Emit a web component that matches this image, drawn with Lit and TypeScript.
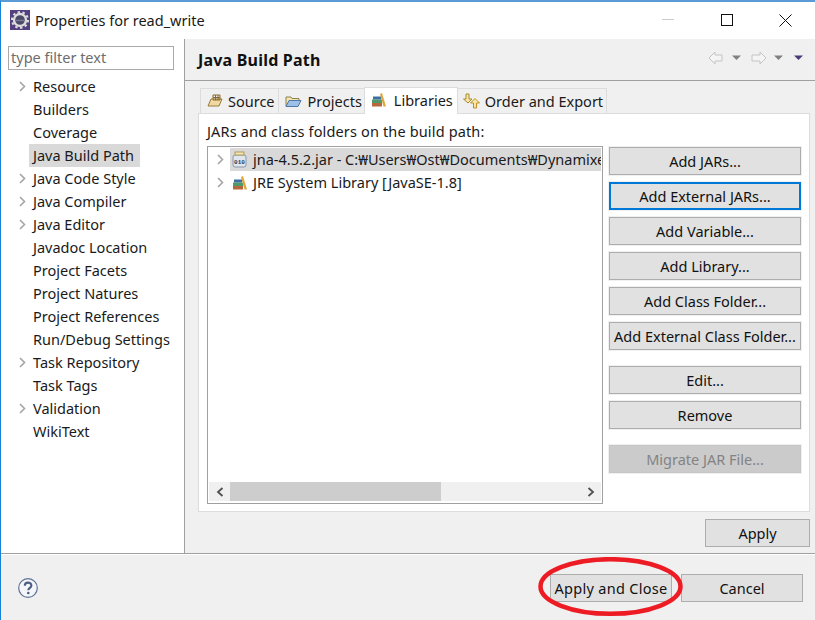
import { LitElement, html, css, svg } from 'lit';
import { customElement } from 'lit/decorators.js';

const tree = [
  ['Resource', true], ['Builders', false], ['Coverage', false], ['Java Build Path', false],
  ['Java Code Style', true], ['Java Compiler', true], ['Java Editor', true], ['Javadoc Location', false],
  ['Project Facets', false], ['Project Natures', false], ['Project References', false],
  ['Run/Debug Settings', false], ['Task Repository', true], ['Task Tags', false],
  ['Validation', true], ['WikiText', false],
] as [string, boolean][];

const chevron = svg`<svg class="chev" width="9" height="11" viewBox="0 0 9 11"><path d="M2 1l4.500 4.500L2 10" fill="none" stroke="#a5a5a5" stroke-width="1.600"/></svg>`;

const booksIcon = html`<svg width="16" height="16" viewBox="0 0 16 16">
  <rect x="1" y="11" width="10" height="3.500" fill="#b5683a"/>
  <rect x="1" y="7.500" width="10" height="3.500" fill="#4f9a6a"/>
  <rect x="2" y="4.500" width="8" height="3" fill="#3f6f9e"/>
  <path d="M9 2l2-1 4 13.500h-2.500z" fill="#e0a63c"/>
</svg>`;

@customElement('app-root')
export class AppRoot extends LitElement {
  static styles = css`
    :host {
      display: block;
      width: 815px;
      height: 620px;
      overflow: hidden;
      font-family: "Noto Sans", sans-serif;
      font-size: 14.5px;
      color: #1a1a1a;
    }
    .win {
      width: 100%;
      height: 100%;
      box-sizing: border-box;
      border-top: 2px solid #5a9bd5;
      border-left: 1px solid #1683d8;
      display: flex;
      flex-direction: column;
      background: #fff;
    }
    .title {
      height: 37px;
      flex: none;
      display: flex;
      align-items: center;
      padding-left: 9px;
      gap: 5px;
    }
    .title .name { flex: 1; margin-top: -2px; }
    .title > svg { margin-top: -1px; }
    .winbtns { display: flex; align-items: center; margin-top: -1px; }
    .winbtns svg { display: block; }
    .wb { width: 59px; display: flex; justify-content: center; }
    .main { flex: 1; display: flex; min-height: 0; border-bottom: 1px solid #a0a0a0; }
    .left {
      width: 183px;
      flex: none;
      border-right: 1px solid #a0a0a0;
      box-sizing: content-box;
      padding-top: 7px;
    }
    .filter {
      margin-left: 7px;
      width: 162px;
      height: 22px;
      border: 1px solid #a9a9a9;
      color: #6d6d6d;
      line-height: 21px;
      padding-left: 2px;
    }
    .tree { margin-top: 5px; }
    .node { height: 23px; display: flex; align-items: center; padding-left: 16px; }
    .arrow { width: 12px; flex: none; display: flex; margin-left: 1px; margin-right: -1px; }
    .label { padding: 0 4px; line-height: 23px; }
    .label.sel { background: #d9d9d9; padding-right: 6px; }
    .right { flex: 1; background: #f0f0f0; display: flex; flex-direction: column; min-width: 0; }
    .head {
      height: 42px;
      flex: none;
      box-sizing: border-box;
      border-bottom: 1px solid #a0a0a0;
      display: flex;
      align-items: center;
      padding: 0 11px 0 13px;
      font-weight: 700;
      font-size: 16px;
      letter-spacing: .2px;
      color: #111;
    }
    .head .h { flex: 1; }
    .nav { display: flex; align-items: center; margin-bottom: 4px; }
    .nav svg { display: block; }
    .tabs { display: flex; margin: 6px 0 0 15px; height: 26px; align-items: flex-end; position: relative; z-index: 1; }
    .tab {
      height: 25px;
      box-sizing: border-box;
      border: 1px solid #dcdcdc;
      border-bottom: none;
      border-right: none;
      display: flex;
      align-items: center;
      gap: 5px;
      padding: 0 3px 0 6px;
    }
    .tab:nth-child(4) { border-right: 1px solid #dcdcdc; padding-left: 5px; }
    .tab:nth-child(2) { gap: 6px; padding-right: 2px; }
    .tab.on {
      background: #fff;
      height: 27px;
      margin-bottom: -1px;
      border-right: 1px solid #dcdcdc;
      padding-bottom: 3px;
      padding-right: 4px;
      gap: 7px;
    }
    .tab.on + .tab { border-left: none; }
    .tabs svg { display: block; flex: none; }
    .panel {
      margin: 0 5px 0 13px;
      height: 399px;
      flex: none;
      box-sizing: border-box;
      background: #fff;
      border: 1px solid #dcdcdc;
      padding: 7px 8px 7px;
      display: flex;
      flex-direction: column;
    }
    .caption { line-height: 20px; height: 25px; letter-spacing: .15px; }
    .body { flex: 1; display: flex; min-height: 0; }
    .list {
      width: 396px;
      flex: none;
      box-sizing: border-box;
      border: 1px solid #a0a0a0;
      display: flex;
      flex-direction: column;
      padding: 1px 1px 2px;
    }
    .rows { flex: 1; }
    .row { height: 23px; display: flex; align-items: center; white-space: nowrap; overflow: hidden; flex: 1; min-width: 0; }
    .row .txt { line-height: 23px; }
    .row .ico { display: flex; margin: 0 4px 0 2px; flex: none; width: 17px; }
    .row.sel { background: #d9d9d9; }
    .sel-wrap { display: flex; align-items: center; }
    .sel-arrow { width: 21px; flex: none; padding-left: 7px; box-sizing: border-box; display: flex; }
    .scroll { height: 19px; background: #f0f0f0; display: flex; align-items: center; }
    .sbtn { width: 21px; display: flex; justify-content: center; flex: none; }
    .sthumb { width: 211px; height: 19px; background: #cdcdcd; }
    .strack { flex: 1; }
    .btns { flex: none; width: 192px; margin: 1px 0 0 6px; display: flex; flex-direction: column; }
    .btn {
      box-sizing: border-box;
      background: #e1e1e1;
      border: 1px solid #adadad;
      height: 28px;
      display: flex;
      align-items: center;
      justify-content: center;
      color: #111;
      white-space: nowrap;
    }
    .btn.focus { border: 2px solid #0078d7; }
    .btn.dis { color: #838383; background: #cbcbcb; border-color: #c6c6c6; }
    .btns .btn { margin-bottom: 7px; box-shadow: 0 0 0 1px #f0f0f0; }
    .btns .btn.gap { margin-top: 9px; }
    .applyrow { display: flex; justify-content: flex-end; padding: 7px 5px 0 0; }
    .applyrow .btn { width: 105px; }
    .foot {
      height: 66px;
      flex: none;
      box-sizing: border-box;
      background: #f0f0f0;
      border-top: 1px solid #fff;
      display: flex;
      align-items: center;
      padding: 0 12px 0 17px;
    }
    .foot .sp { flex: 1; }
    .foot .btn { height: 28px; margin-top: 1px; }
    .foot .ac { width: 122px; margin-right: 9px; position: relative; letter-spacing: .3px; }
    .foot .cancel { width: 122px; }
    .ring { position: absolute; left: -13px; top: -18px; pointer-events: none; }
  `;

  render() {
    return html`
      <div class="win">
        <div class="title">
          <svg width="20" height="20" viewBox="0 0 20 20">
            <rect width="20" height="20" fill="#54407f"/>
            <circle cx="10" cy="10" r="8" fill="none" stroke="#e0e0e0" stroke-width="2" stroke-dasharray="2.400 2.600"/>
            <circle cx="10" cy="10" r="6" fill="#4b4a66" stroke="#dcdcdc" stroke-width="2.400"/>
            <path d="M6 10.500h8" stroke="#77759a" stroke-width="1.500"/>
          </svg>
          <span class="name">Properties for read_write</span>
          <div class="winbtns">
            <div class="wb"><svg width="12" height="2"><rect width="12" height="1" fill="#cccccc"/></svg></div>
            <div class="wb"><svg width="12" height="12"><rect x=".5" y=".5" width="11" height="11" fill="none" stroke="#111"/></svg></div>
            <div class="wb"><svg width="13" height="13"><path d="M.5.5l12 12M12.500.5l-12 12" stroke="#111" fill="none"/></svg></div>
          </div>
        </div>
        <div class="main">
          <div class="left">
            <div class="filter">type filter text</div>
            <div class="tree">
              ${tree.map(([t, exp]) => html`
                <div class="node">
                  <span class="arrow">${exp ? chevron : ''}</span>
                  <span class="label ${t === 'Java Build Path' ? 'sel' : ''}">${t}</span>
                </div>`)}
            </div>
          </div>
          <div class="right">
            <div class="head">
              <span class="h">Java Build Path</span>
              <div class="nav">
                <svg width="96" height="14" viewBox="0 0 96 14">
                  <path d="M1 7l6-6v3h7v6H7v3z" fill="#f4f4f4" stroke="#c4c4c4"/>
                  <path d="M24 4.500h9L28.500 9z" fill="#808080"/>
                  <path d="M58 7l-6-6v3h-8v6h8v3z" fill="#f4f4f4" stroke="#c4c4c4"/>
                  <path d="M66 4.500h9L70.500 9z" fill="#808080"/>
                  <path d="M86 4.500h9L90.500 9z" fill="#4b3a78"/>
                </svg>
              </div>
            </div>
            <div class="tabs">
              <div class="tab">
                <svg width="16" height="14" viewBox="0 0 16 14"><path d="M1 12l3-7h11l-3 7z" fill="#f0d9a0" stroke="#9a7a3a"/><path d="M6 1h7v5H6zM8.500 1v5M11 1v5M6 3.500h7" fill="none" stroke="#8a6a30"/></svg>
                <span>Source</span>
              </div>
              <div class="tab">
                <svg width="17" height="14" viewBox="0 0 17 14"><path d="M1 12V3h5l1 1.500h7V7" fill="#f5e6b0" stroke="#8a8050"/><path d="M1 12.500l3-6h12l-3 6z" fill="#9cc0e8" stroke="#4f78a8"/></svg>
                <span>Projects</span>
              </div>
              <div class="tab on">${booksIcon}<span>Libraries</span></div>
              <div class="tab">
                <svg width="17" height="16" viewBox="0 0 17 16"><path d="M4 1v5H1.500L6 10l4-4H7V1z" fill="#f8e6a8" stroke="#a88a30" transform="translate(-1 0)"/><path d="M11 15v-5H8l4.500-4.500L17 10h-3v5z" fill="#f8e6a8" stroke="#c09020" transform="translate(-.5 0)"/></svg>
                <span>Order and Export</span>
              </div>
            </div>
            <div class="panel">
              <div class="caption">JARs and class folders on the build path:</div>
              <div class="body">
                <div class="list">
                  <div class="rows">
                    <div class="sel-wrap">
                      <span class="sel-arrow">${chevron}</span>
                      <div class="row sel">
                        <span class="ico"><svg width="15" height="17" viewBox="0 0 15 17">
                          <rect x="1" y="4" width="13" height="12" rx="2" fill="#dfe6ee" stroke="#8a98aa"/>
                          <rect x="3" y="1" width="9" height="3" fill="#f4e7b4" stroke="#b09a5a"/>
                          <text x="7.500" y="12.500" font-size="6" font-family="Liberation Mono" font-weight="700" text-anchor="middle" fill="#2a3a55">010</text>
                        </svg></span>
                        <span class="txt">jna-4.5.2.jar - C:₩Users₩Ost₩Documents₩Dynamixe</span>
                      </div>
                    </div>
                    <div class="sel-wrap">
                      <span class="sel-arrow">${chevron}</span>
                      <div class="row"><span class="ico">${booksIcon}</span><span class="txt">JRE System Library [JavaSE-1.8]</span></div>
                    </div>
                  </div>
                  <div class="scroll">
                    <div class="sbtn"><svg width="8" height="10" viewBox="0 0 8 10"><path d="M6.500 1L2 5l4.500 4" fill="none" stroke="#505050" stroke-width="1.800"/></svg></div>
                    <div class="sthumb"></div>
                    <div class="strack"></div>
                    <div class="sbtn"><svg width="8" height="10" viewBox="0 0 8 10"><path d="M1.500 1L6 5 1.500 9" fill="none" stroke="#505050" stroke-width="1.800"/></svg></div>
                  </div>
                </div>
                <div class="btns">
                  <div class="btn">Add JARs...</div>
                  <div class="btn focus">Add External JARs...</div>
                  <div class="btn">Add Variable...</div>
                  <div class="btn">Add Library...</div>
                  <div class="btn">Add Class Folder...</div>
                  <div class="btn">Add External Class Folder...</div>
                  <div class="btn gap">Edit...</div>
                  <div class="btn">Remove</div>
                  <div class="btn dis gap">Migrate JAR File...</div>
                </div>
              </div>
            </div>
            <div class="applyrow"><div class="btn">Apply</div></div>
          </div>
        </div>
        <div class="foot">
          <svg width="20" height="20" viewBox="0 0 20 20">
            <circle cx="10" cy="10" r="9.300" fill="#f4f6fa" stroke="#5f7394" stroke-width="1.200"/>
            <path d="M6.800 7.800c0-4.200 6.600-4.200 6.600-.3 0 2.400-3.100 2.400-3.100 4.800" fill="none" stroke="#4b5f82" stroke-width="2.100"/>
            <circle cx="10.300" cy="15" r="1.300" fill="#4b5f82"/>
          </svg>
          <div class="sp"></div>
          <div class="btn ac">Apply and Close
            <svg class="ring" width="146" height="60" viewBox="0 0 146 60">
              <ellipse cx="72.500" cy="29.500" rx="70" ry="27.300" fill="none" stroke="#ed1c24" stroke-width="4.500"/>
            </svg>
          </div>
          <div class="btn cancel">Cancel</div>
        </div>
      </div>
    `;
  }
}
